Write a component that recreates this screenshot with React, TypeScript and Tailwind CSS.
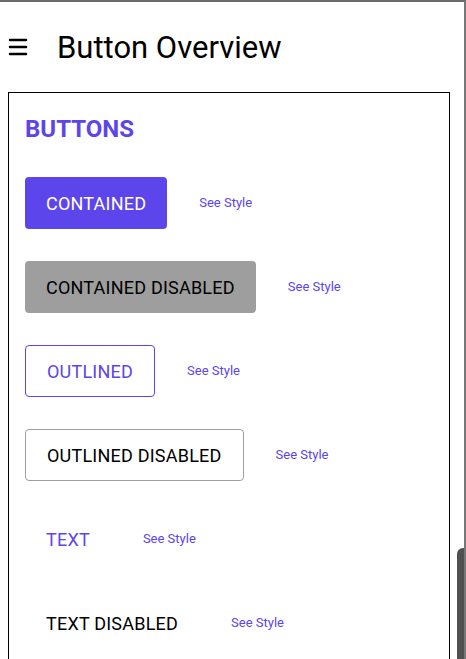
import { Menu } from "lucide-react";

const rows = [
  { label: "CONTAINED", kind: "contained" },
  { label: "CONTAINED DISABLED", kind: "containedDisabled" },
  { label: "OUTLINED", kind: "outlined" },
  { label: "OUTLINED DISABLED", kind: "outlinedDisabled" },
  { label: "TEXT", kind: "text" },
  { label: "TEXT DISABLED", kind: "textDisabled" },
];

const kindClass: Record<string, string> = {
  contained: "bg-[#5c45eb] text-white",
  containedDisabled: "bg-[#9e9e9e] text-black",
  outlined: "border border-[#5c45eb] text-[#5c45eb]",
  outlinedDisabled: "border border-[#9e9e9e] text-black",
  text: "text-[#5c45eb]",
  textDisabled: "text-black",
};

const App = () => {
  return (
    <div
      className="relative h-[659px] w-[466px] overflow-hidden border-t-2 border-r-2 border-t-[#6b6b6b] border-r-[#777777] bg-white"
      style={{ fontFamily: "Roboto, 'Liberation Sans', sans-serif" }}
    >
      {/* Top bar */}
      <div className="flex h-[90px] items-center">
        <Menu className="ml-[6px] h-6 w-6 text-black" strokeWidth={2.5} />
        <h1 className="ml-[27px] text-[31px] leading-none text-black">Button Overview</h1>
      </div>

      {/* Content card */}
      <div className="ml-2 w-[442px] border border-black px-4 pb-24 pt-[22px]">
        <h2 className="text-[24px] font-bold leading-[28px] text-[#5c45eb]">BUTTONS</h2>
        <div className="mt-[34px] flex flex-col gap-8">
          {rows.map((r) => (
            <div key={r.label} className="flex items-center gap-8">
              <div
                className={`flex h-[52px] items-center rounded-[4px] px-[21px] text-[18px] tracking-[0.22px] ${kindClass[r.kind]}`}
              >
                {r.label}
              </div>
              <span className="text-[13px] text-[#5c45eb]">See Style</span>
            </div>
          ))}
        </div>
      </div>

      {/* Scrollbar thumb */}
      <div className="absolute right-0 top-[546px] h-[140px] w-[7px] rounded-tl-[6px] bg-[#505050]" />
    </div>
  );
};

export default App;
